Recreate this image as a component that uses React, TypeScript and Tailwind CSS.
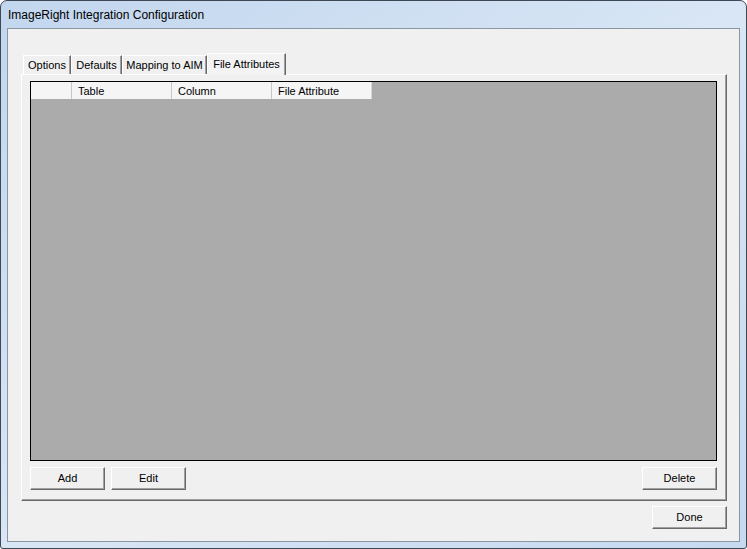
import React from "react";

const font = { fontFamily: '"Liberation Sans", Arial, sans-serif' };

function Btn({ label }: { label: string }) {
  return (
    <div className="w-[75px] h-[23px] box-border border border-t-white border-l-white border-r-[#696969] border-b-[#696969] shadow-[inset_-1px_-1px_0_#a0a0a0] bg-[#f0f0f0] flex items-center justify-center text-[11px] text-black">
      {label}
    </div>
  );
}

function Tab({ label, w, active }: { label: string; w: string; active?: boolean }) {
  if (active) {
    return (
      <div
        className={`${w} h-[22px] -mb-[1px] relative z-10 box-border border-t border-l border-white border-r border-r-[#696969] shadow-[inset_-1px_0_0_#a0a0a0] bg-[#f3f3f3] flex items-start justify-center pt-[2px] text-[11px] text-black`}
      >
        {label}
      </div>
    );
  }
  return (
    <div
      className={`${w} h-[19px] box-border border-t border-l border-white border-r border-r-[#696969] shadow-[inset_-1px_0_0_#a0a0a0] bg-[#f0f0f0] flex items-start justify-center pt-[1px] text-[11px] text-black`}
    >
      {label}
    </div>
  );
}

export default function App() {
  return (
    <div className="w-[747px] h-[549px] bg-white" style={font}>
      <div className="w-[747px] h-[549px] box-border border border-[#3e4854] rounded-t-[7px] rounded-b-[3px] bg-gradient-to-br from-[#c2d6ee] via-[#d8e6f5] to-[#c6d9ef] flex flex-col px-[6px] pb-[6px]">
        <div className="h-[27px] flex items-center pl-[1px] pt-[1px] text-[12px] text-black">
          ImageRight Integration Configuration
        </div>
        <div className="h-[514px] box-border border border-[#8b96a3] bg-[#f0f0f0] flex flex-col pl-[13px] pt-[24px]">
          <div className="flex items-end h-[21px] pl-[2px]">
            <Tab label="Options" w="w-[48px]" />
            <Tab label="Defaults" w="w-[51px]" />
            <Tab label="Mapping to AIM" w="w-[85px]" />
            <Tab label="File Attributes" w="w-[79px]" active />
          </div>
          <div className="w-[706px] h-[427px] box-border border border-t-white border-l-white border-r-[#696969] border-b-[#696969] shadow-[inset_-1px_-1px_0_#a0a0a0] flex flex-col pl-[8px] pt-[6px]">
            <div className="w-[687px] h-[380px] box-border border border-black bg-[#ababab] flex flex-col">
              <div className="flex h-[17px]">
                <div className="w-[41px] h-[17px] box-border border-r border-[#c8c8c8] bg-[#f5f5f5]" />
                <div className="w-[100px] h-[17px] box-border border-r border-[#c8c8c8] bg-[#f5f5f5] pl-[6px] pt-[1px] flex items-center text-[11px] text-black">Table</div>
                <div className="w-[100px] h-[17px] box-border border-r border-[#c8c8c8] bg-[#f5f5f5] pl-[6px] pt-[1px] flex items-center text-[11px] text-black">Column</div>
                <div className="w-[100px] h-[17px] box-border border-r border-[#d8d8d8] bg-[#f5f5f5] pl-[6px] pt-[1px] flex items-center text-[11px] text-black">File Attribute</div>
              </div>
            </div>
            <div className="w-[687px] flex justify-between mt-[6px]">
              <div className="flex gap-[6px]">
                <Btn label="Add" />
                <Btn label="Edit" />
              </div>
              <Btn label="Delete" />
            </div>
          </div>
          <div className="w-[706px] flex justify-end mt-[5px]">
            <Btn label="Done" />
          </div>
        </div>
      </div>
    </div>
  );
}
